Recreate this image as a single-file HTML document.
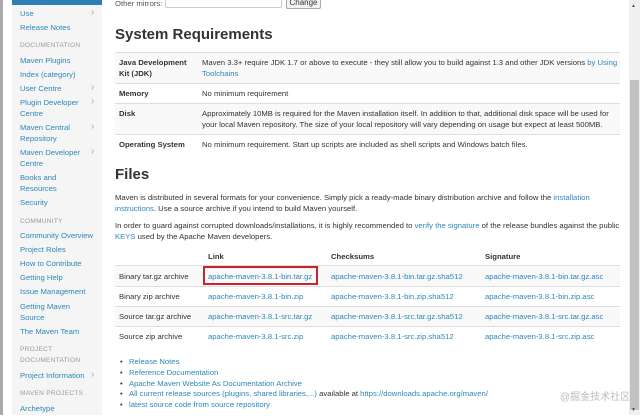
<!DOCTYPE html>
<html><head><meta charset="utf-8"><style>
*{margin:0;padding:0;box-sizing:border-box}
body{width:640px;height:415px;overflow:hidden;background:#fff;font-family:"Liberation Sans",sans-serif;font-size:7.7px;color:#333;position:relative}
.a{position:absolute;white-space:nowrap;line-height:11px}
.l{color:#2d87b8}
.h{color:#999;font-size:6.5px;letter-spacing:.3px}
.sb{position:absolute;left:12px;top:0;width:90px;height:415px;background:#f5f5f5}
.cv{position:absolute;left:91px;color:#aaa;font-size:10px}
h2{position:absolute;font-size:15px;font-weight:bold;color:#333;white-space:nowrap}
.row{position:absolute;left:115px;width:505px;border-top:1px solid #ddd}
.b{font-weight:bold}
</style></head><body>
<div style="position:absolute;left:0;top:0;width:3px;height:415px;background:#aaa"></div>
<div class="sb"></div>
<div style="position:absolute;left:12px;top:0;width:90px;height:5px;background:#2d7fb5"></div>
<div class="a l" style="left:20px;top:8px">Use</div><div class="cv a" style="top:7px">›</div>
<div class="a l" style="left:20px;top:22px">Release Notes</div>
<div class="a h" style="left:20px;top:40px">DOCUMENTATION</div>
<div class="a l" style="left:20px;top:55px">Maven Plugins</div>
<div class="a l" style="left:20px;top:69px">Index (category)</div>
<div class="a l" style="left:20px;top:83px">User Centre</div><div class="cv a" style="top:82px">›</div>
<div class="a l" style="left:20px;top:97px">Plugin Developer<br>Centre</div><div class="cv a" style="top:96px">›</div>
<div class="a l" style="left:20px;top:122px">Maven Central<br>Repository</div><div class="cv a" style="top:121px">›</div>
<div class="a l" style="left:20px;top:147px">Maven Developer<br>Centre</div><div class="cv a" style="top:146px">›</div>
<div class="a l" style="left:20px;top:172px">Books and<br>Resources</div>
<div class="a l" style="left:20px;top:197px">Security</div>
<div class="a h" style="left:20px;top:216px">COMMUNITY</div>
<div class="a l" style="left:20px;top:230px">Community Overview</div>
<div class="a l" style="left:20px;top:244px">Project Roles</div>
<div class="a l" style="left:20px;top:258px">How to Contribute</div>
<div class="a l" style="left:20px;top:272px">Getting Help</div>
<div class="a l" style="left:20px;top:286px">Issue Management</div>
<div class="a l" style="left:20px;top:301px">Getting Maven<br>Source</div>
<div class="a l" style="left:20px;top:326px">The Maven Team</div>
<div class="a h" style="left:20px;top:344px">PROJECT<br>DOCUMENTATION</div>
<div class="a l" style="left:20px;top:370px">Project Information</div><div class="cv a" style="top:369px">›</div>
<div class="a h" style="left:20px;top:388px">MAVEN PROJECTS</div>
<div class="a l" style="left:20px;top:403px">Archetype</div>

<div class="a" style="left:115px;top:-2px;color:#555">Other mirrors:</div>
<div style="position:absolute;left:165px;top:-4px;width:117px;height:12px;border:1px solid #ccc;border-radius:2px"></div>
<div style="position:absolute;left:286px;top:-4px;width:35px;height:13px;border:1px solid #aaa;border-radius:2px;background:#f3f3f3;font-size:8px;text-align:center;line-height:12px">Change</div>

<h2 style="left:115px;top:26px">System Requirements</h2>
<div class="row" style="top:52px;height:31px;background:#f9f9f9"></div>
<div class="row" style="top:83px;height:20px"></div>
<div class="row" style="top:103px;height:32px;background:#f9f9f9;border-bottom:1px solid #ddd"></div>
<div class="a b" style="left:119px;top:57px">Java Development<br>Kit (JDK)</div>
<div class="a" style="left:202px;top:57px">Maven 3.3+ require JDK 1.7 or above to execute - they still allow you to build against 1.3 and other JDK versions <span class="l">by Using</span><br><span class="l">Toolchains</span></div>
<div class="a b" style="left:119px;top:88px">Memory</div>
<div class="a" style="left:202px;top:88px">No minimum requirement</div>
<div class="a b" style="left:119px;top:108px">Disk</div>
<div class="a" style="left:202px;top:108px">Approximately 10MB is required for the Maven installation itself. In addition to that, additional disk space will be used for<br>your local Maven repository. The size of your local repository will vary depending on usage but expect at least 500MB.</div>
<div class="a b" style="left:119px;top:139px">Operating System</div>
<div class="a" style="left:202px;top:139px">No minimum requirement. Start up scripts are included as shell scripts and Windows batch files.</div>

<h2 style="left:115px;top:166px">Files</h2>
<div class="a" style="left:115px;top:192px">Maven is distributed in several formats for your convenience. Simply pick a ready-made binary distribution archive and follow the <span class="l">installation</span><br><span class="l">instructions</span>. Use a source archive if you intend to build Maven yourself.</div>
<div class="a" style="left:115px;top:220px">In order to guard against corrupted downloads/installations, it is highly recommended to <span class="l">verify the signature</span> of the release bundles against the public<br><span class="l">KEYS</span> used by the Apache Maven developers.</div>
<div class="a b" style="left:208px;top:251px">Link</div>
<div class="a b" style="left:331px;top:251px">Checksums</div>
<div class="a b" style="left:485px;top:251px">Signature</div>
<div class="row" style="top:265px;height:21px;background:#f9f9f9"></div>
<div class="row" style="top:286px;height:20px"></div>
<div class="row" style="top:306px;height:20px;background:#f9f9f9"></div>
<div class="row" style="top:326px;height:20px"></div>
<div class="a" style="left:119px;top:271px">Binary tar.gz archive</div>
<div class="a" style="left:119px;top:291px">Binary zip archive</div>
<div class="a" style="left:119px;top:311px">Source tar.gz archive</div>
<div class="a" style="left:119px;top:331px">Source zip archive</div>
<div class="a l" style="left:208px;top:271px">apache-maven-3.8.1-bin.tar.gz</div>
<div class="a l" style="left:208px;top:291px">apache-maven-3.8.1-bin.zip</div>
<div class="a l" style="left:208px;top:311px">apache-maven-3.8.1-src.tar.gz</div>
<div class="a l" style="left:208px;top:331px">apache-maven-3.8.1-src.zip</div>
<div class="a l" style="left:331px;top:271px">apache-maven-3.8.1-bin.tar.gz.sha512</div>
<div class="a l" style="left:331px;top:291px">apache-maven-3.8.1-bin.zip.sha512</div>
<div class="a l" style="left:331px;top:311px">apache-maven-3.8.1-src.tar.gz.sha512</div>
<div class="a l" style="left:331px;top:331px">apache-maven-3.8.1-src.zip.sha512</div>
<div class="a l" style="left:485px;top:271px">apache-maven-3.8.1-bin.tar.gz.asc</div>
<div class="a l" style="left:485px;top:291px">apache-maven-3.8.1-bin.zip.asc</div>
<div class="a l" style="left:485px;top:311px">apache-maven-3.8.1-src.tar.gz.asc</div>
<div class="a l" style="left:485px;top:331px">apache-maven-3.8.1-src.zip.asc</div>
<div style="position:absolute;left:203px;top:266px;width:115px;height:19px;border:2px solid #c8242b"></div>

<div class="a" style="left:120px;top:357px;line-height:10.8px">•<br>•<br>•<br>•<br>•</div>
<div class="a l" style="left:129px;top:357px;line-height:10.8px">Release Notes<br>Reference Documentation<br>Apache Maven Website As Documentation Archive<br>All current release sources (plugins, shared libraries,...) <span style="color:#333">available at</span> https://downloads.apache.org/maven/<br>latest source code from source repository</div>
<div class="a" style="left:560px;top:392px;color:#bbb;font-size:10px;font-family:'Liberation Sans','Noto Sans CJK SC',sans-serif">@掘金技术社区</div>

<div style="position:absolute;left:629px;top:0;width:11px;height:415px;background:#f0f0f0"></div>
<div style="position:absolute;left:630px;top:80px;width:9px;height:330px;background:#c1c1c1"></div>
<div class="a" style="left:631px;top:1px;font-size:5px;color:#555">▲</div>
<div class="a" style="left:631px;top:405px;font-size:5px;color:#555">▼</div>
</body></html>
